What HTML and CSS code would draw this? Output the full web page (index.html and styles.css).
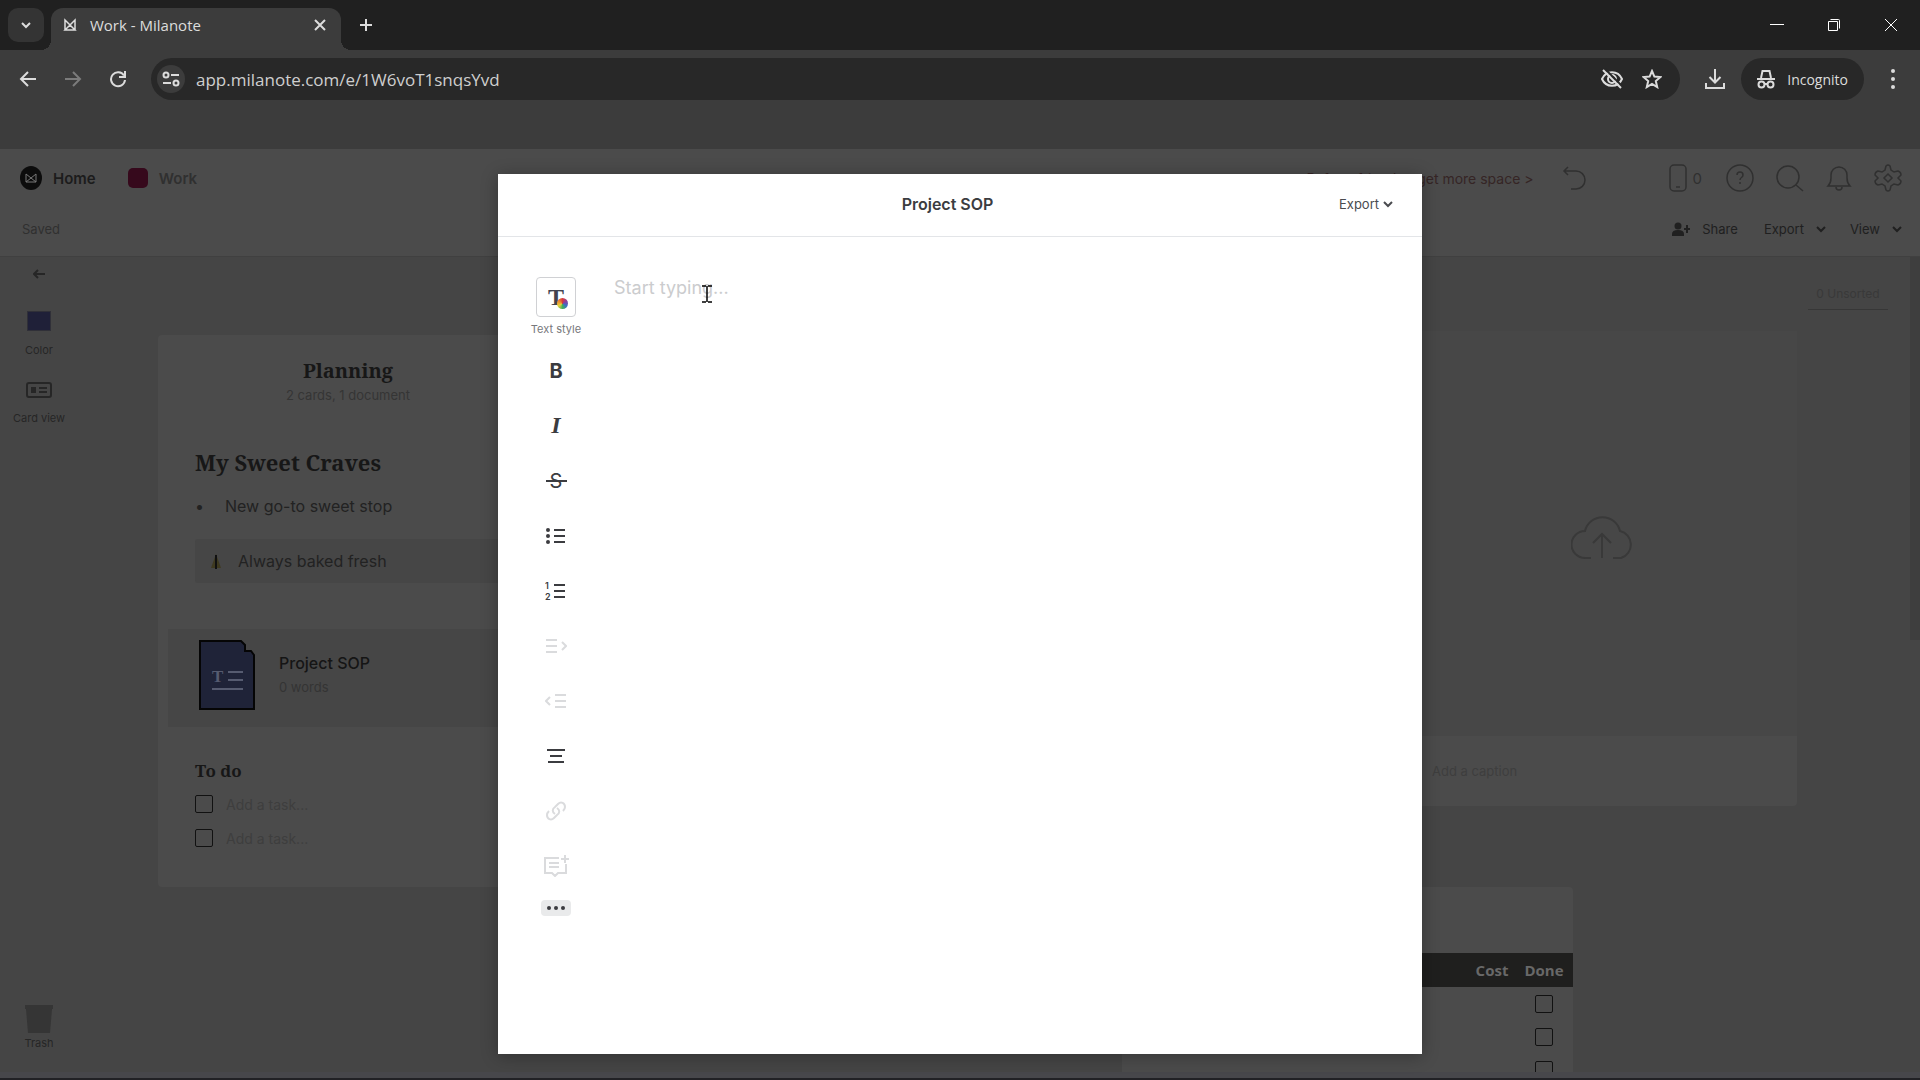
FILE: index.html
```html
<!DOCTYPE html>
<html lang="en">
<head>
<meta charset="UTF-8">
<meta name="viewport" content="width=device-width, initial-scale=1.0">
<title>Work - Milanote</title>
<link rel="stylesheet" href="styles.css">
</head>
<body>

<!-- browser window -->
<header class="browser">
    <div class="tab-strip">
        <button class="tab-search" aria-label="Search tabs">
            <svg width="12" height="12" viewBox="0 0 12 12"><path d="M2 4l4 4 4-4"/></svg>
        </button>
        <div class="tab">
            <svg class="favicon" width="14" height="16" viewBox="0 0 14 16"><path d="M2 13V3l5 5 5-5v10M2 13l5-5 5 5z"/></svg>
            <span class="tab-title">Work - Milanote</span>
            <button class="icon-btn" aria-label="Close tab">
                <svg width="12" height="12" viewBox="0 0 12 12"><path d="M1 1l10 10M11 1L1 11"/></svg>
            </button>
        </div>
        <button class="icon-btn new-tab" aria-label="New tab">
            <svg width="14" height="14" viewBox="0 0 14 14"><path d="M7 1v12M1 7h12"/></svg>
        </button>
        <div class="window-controls">
            <button class="icon-btn" aria-label="Minimize">
                <svg width="14" height="14" viewBox="0 0 14 14"><path d="M0 6.500h14"/></svg>
            </button>
            <button class="icon-btn" aria-label="Restore">
                <svg width="14" height="14" viewBox="0 0 14 14"><path d="M1.500 3.500h9v9h-9zM3.500 1.500h8a1 1 0 0 1 1 1v8"/></svg>
            </button>
            <button class="icon-btn" aria-label="Close">
                <svg width="14" height="14" viewBox="0 0 14 14"><path d="M1 1l12 12M13 1L1 13"/></svg>
            </button>
        </div>
    </div>
    <div class="nav-bar">
        <button class="icon-btn" aria-label="Back">
            <svg width="18" height="18" viewBox="0 0 18 18"><path d="M17 9H2M9 2L2 9l7 7"/></svg>
        </button>
        <button class="icon-btn faded" aria-label="Forward">
            <svg width="18" height="18" viewBox="0 0 18 18"><path d="M1 9h15M9 2l7 7-7 7"/></svg>
        </button>
        <button class="icon-btn" aria-label="Reload">
            <svg width="18" height="18" viewBox="0 0 18 18"><path d="M15 5.500A7 7 0 1 0 16 10M16 1v6h-6"/></svg>
        </button>
        <div class="omnibox">
            <button class="site-info" aria-label="Site information">
                <svg width="18" height="16" viewBox="0 0 18 16"><circle cx="4" cy="4" r="2.500"/><path d="M9 4h8M1 12h8"/><circle cx="14" cy="12" r="2.500"/></svg>
            </button>
            <input class="url" type="text" aria-label="Address" value="app.milanote.com/e/1W6voT1snqsYvd">
            <button class="icon-btn" aria-label="Cookies blocked">
                <svg width="24" height="22" viewBox="0 0 24 22"><path d="M2 11c4-9 16-9 20 0c-4 9-16 9-20 0z"/><circle cx="12" cy="11" r="4"/><path class="gap" d="M4 0l19 19"/><path d="M3 2l18 18"/></svg>
            </button>
            <button class="icon-btn" aria-label="Bookmark">
                <svg width="20" height="20" viewBox="0 0 20 20"><path d="M10 2l2.400 5.600 6 .5-4.600 4 1.400 6L10 15l-5.200 3.100 1.400-6-4.600-4 6-.5z"/></svg>
            </button>
        </div>
        <button class="icon-btn" aria-label="Downloads">
            <svg width="22" height="22" viewBox="0 0 22 22"><path d="M11 1v13M5.500 9l5.500 5.500L16.500 9M2 15v5h18v-5"/></svg>
        </button>
        <button class="incognito">
            <svg width="18" height="20" viewBox="0 0 18 20"><path d="M0 10h18M4 9l1.500-7h7L14 9"/><circle cx="4.500" cy="15.500" r="3"/><circle cx="13.500" cy="15.500" r="3"/><path d="M7.500 15h3"/></svg>
            Incognito
        </button>
        <button class="icon-btn" aria-label="Menu">
            <svg class="solid" width="4" height="20" viewBox="0 0 4 20"><circle cx="2" cy="2" r="2"/><circle cx="2" cy="10" r="2"/><circle cx="2" cy="18" r="2"/></svg>
        </button>
    </div>
</header>

<main class="app">
    <div class="app-header">
        <div class="header-row">
            <a class="crumb home" href="#">
                <svg width="22" height="24" viewBox="0 0 22 24"><ellipse class="ink" cx="11" cy="12" rx="11" ry="12"/><path d="M6 16V8l5 4 5-4v8M6 16l5-4 5 4z"/></svg>
                Home
            </a>
            <a class="crumb" href="#"><span class="board-icon"></span>Work</a>
            <a class="upsell" href="#">Refer a friend to get more space &gt;</a>
            <button class="icon-btn undo" aria-label="Undo">
                <svg width="24" height="24" viewBox="0 0 24 24"><path d="M6 1L2 5l4 4M2 5h12a9 9 0 0 1 0 18h-5"/></svg>
            </button>
            <button class="icon-btn phone">
                <svg width="20" height="30" viewBox="0 0 20 30"><rect x="2" y="2" width="16" height="26" rx="4"/><path d="M8 24h4"/></svg>
                0
            </button>
            <button class="icon-btn" aria-label="Help">
                <svg width="28" height="28" viewBox="0 0 28 28"><circle cx="14" cy="14" r="13"/><path d="M11 11c0-4 6-4 6 0c0 3-3 2-3 5M14 18v2"/></svg>
            </button>
            <button class="icon-btn" aria-label="Search">
                <svg width="28" height="28" viewBox="0 0 28 28"><circle cx="12" cy="13" r="11"/><path d="M20 21l7 6"/></svg>
            </button>
            <button class="icon-btn" aria-label="Notifications">
                <svg width="26" height="28" viewBox="0 0 26 28"><path d="M2 22c2-2 3-4 3-8v-3a8 8 0 0 1 16 0v3c0 4 1 6 3 8zM10 23a3 3 0 0 0 6 0"/></svg>
            </button>
            <button class="icon-btn" aria-label="Settings">
                <svg width="28" height="28" viewBox="0 0 28 28"><path d="M12 2q2-2 4 0l1 4 3 2 4-1q3 1 3 4l-3 3 3 3q0 3-3 4l-4-1-3 2-1 4q-2 2-4 0l-1-4-3-2-4 1q-3-1-3-4l3-3-3-3q0-3 3-4l4 1 3-2z"/><path d="M14 10l4 4-4 4-4-4z"/></svg>
            </button>
        </div>
        <div class="header-row sub">
            <span class="saved">Saved</span>
            <button class="text-btn share">
                <svg class="solid" width="18" height="14" viewBox="0 0 18 14"><circle cx="6" cy="4" r="3.500"/><path d="M0 14v-2q0-4 6-4t6 4v2zM14 3h2v3h2v2h-2v3h-2V8h-2V6h2z"/></svg>
                Share
            </button>
            <button class="text-btn">Export <svg width="10" height="8" viewBox="0 0 10 8"><path d="M1 2l4 4 4-4"/></svg></button>
            <button class="text-btn">View <svg width="10" height="8" viewBox="0 0 10 8"><path d="M1 2l4 4 4-4"/></svg></button>
        </div>
    </div>

    <div class="workspace">
        <nav class="tools">
            <button class="tool" aria-label="Back">
                <svg width="12" height="10" viewBox="0 0 12 10"><path d="M12 5H1M5 1L1 5l4 4"/></svg>
            </button>
            <button class="tool"><span class="swatch"></span>Color</button>
            <button class="tool">
                <svg width="26" height="18" viewBox="0 0 26 18"><rect x="1" y="2" width="24" height="14" rx="2"/><path class="ink" d="M5 6h5v6H5z"/><path d="M13 7h8M13 11h8"/></svg>
                Card view
            </button>
            <button class="tool trash">
                <svg width="30" height="30" viewBox="0 0 30 30"><path d="M1 1h28v4h-1l-2 24H4L2 5H1z"/></svg>
                Trash
            </button>
        </nav>

        <div class="canvas">
            <button class="unsorted">0 Unsorted</button>

            <section class="column planning">
                <h2>Planning</h2>
                <p class="count">2 cards, 1 document</p>
                <div class="note">
                    <h1>My Sweet Craves</h1>
                    <ul>
                        <li>New go-to sweet stop</li>
                    </ul>
                    <p class="callout">
                        <svg width="12" height="18" viewBox="0 0 12 18"><path class="glow" d="M6 2l5 14H1z"/><path class="wick" d="M6 3v14"/></svg>
                        Always baked fresh
                    </p>
                </div>
                <div class="document">
                    <svg width="58" height="72" viewBox="0 0 58 72">
                        <path class="sheet" d="M2 2h41l4 4v6h6l3 4v54H2z"/>
                        <text x="14" y="43">T</text>
                        <path class="lines" d="M30 33h15M30 41h15M14 50h31"/>
                    </svg>
                    <div>
                        <h3>Project SOP</h3>
                        <p>0 words</p>
                    </div>
                </div>
                <div class="todo">
                    <h4>To do</h4>
                    <div class="task"><input type="checkbox" aria-label="Done"><input type="text" placeholder="Add a task..." aria-label="Task 1"></div>
                    <div class="task"><input type="checkbox" aria-label="Done"><input type="text" placeholder="Add a task..." aria-label="Task 2"></div>
                </div>
            </section>

            <section class="column upload">
                <div class="drop">
                    <svg width="62" height="48" viewBox="0 0 62 48"><path d="M20 46H14A13 13 0 0 1 14 19A18 18 0 0 1 49 19A14 14 0 0 1 50 46H42M31 46V23M22 31l9-9 9 9"/></svg>
                </div>
                <input class="caption" type="text" placeholder="Add a caption" aria-label="Caption">
            </section>

            <section class="column costs">
                <table>
                    <thead>
                        <tr><th></th><th>Cost</th><th>Done</th></tr>
                    </thead>
                    <tbody>
                        <tr><td></td><td></td><td><input type="checkbox" aria-label="Done"></td></tr>
                        <tr><td></td><td></td><td><input type="checkbox" aria-label="Done"></td></tr>
                        <tr><td></td><td></td><td><input type="checkbox" aria-label="Done"></td></tr>
                    </tbody>
                </table>
            </section>
            <div class="scroll-y"></div>
        </div>
    </div>
    <div class="scroll-x"></div>

    <!-- document editor -->
    <div class="overlay">
        <div class="modal" role="dialog" aria-labelledby="docTitle">
            <div class="modal-header">
                <h2 id="docTitle">Project SOP</h2>
                <button class="text-btn">Export <svg width="10" height="8" viewBox="0 0 10 8"><path d="M1 2l4 4 4-4"/></svg></button>
            </div>
            <div class="modal-body">
                <div class="format-bar">
                    <button class="text-style">
                        <span class="style-box">
                            <span class="big-t">T</span>
                            <span class="wheel"></span>
                        </span>
                        Text style
                    </button>
                    <button class="format bold">B</button>
                    <button class="format italic">I</button>
                    <button class="format strike" aria-label="Strikethrough"><span>S</span></button>
                    <button class="format" aria-label="Bullet list">
                        <svg width="20" height="18" viewBox="0 0 20 18"><path d="M8 3h11M8 9h11M8 15h11"/><circle class="dot" cx="2" cy="3" r="2"/><circle class="dot" cx="2" cy="9" r="2"/><circle class="dot" cx="2" cy="15" r="2"/></svg>
                    </button>
                    <button class="format" aria-label="Numbered list">
                        <svg width="22" height="20" viewBox="0 0 22 20"><text x="0" y="8">1</text><text x="0" y="19">2</text><path d="M9 4h11M9 10h11M9 16h11"/></svg>
                    </button>
                    <button class="format" disabled aria-label="Indent">
                        <svg width="22" height="16" viewBox="0 0 22 16"><path d="M1 2h11M1 8h11M1 14h11M17 4l4 4-4 4"/></svg>
                    </button>
                    <button class="format" disabled aria-label="Outdent">
                        <svg width="22" height="16" viewBox="0 0 22 16"><path d="M10 2h11M10 8h11M10 14h11M5 4L1 8l4 4"/></svg>
                    </button>
                    <button class="format" aria-label="Align">
                        <svg width="20" height="16" viewBox="0 0 20 16"><path d="M1 2h18M4 8h12M2 14h16"/></svg>
                    </button>
                    <button class="format" disabled aria-label="Link">
                        <svg width="20" height="20" viewBox="0 0 20 20"><path d="M9 13c-3-2-3-5 0-7l3-3c3-3 7-1 7 3c0 2-1 3-2 4M11 7c3 2 3 5 0 7l-3 3c-3 3-7 1-7-3c0-2 1-3 2-4"/></svg>
                    </button>
                    <button class="format" disabled aria-label="Comment">
                        <svg width="26" height="22" viewBox="0 0 26 22"><path d="M16 3H2v15h7l3 3 3-3h8V9M6 8h10M6 12h10M22 0v8M18 4h8"/></svg>
                    </button>
                    <button class="more" aria-label="More">
                        <svg width="18" height="4" viewBox="0 0 18 4"><circle cx="2" cy="2" r="2"/><circle cx="9" cy="2" r="2"/><circle cx="16" cy="2" r="2"/></svg>
                    </button>
                </div>
                <div class="editor">
                    <textarea placeholder="Start typing..." aria-label="Document text"></textarea>
                    <svg class="caret" width="10" height="18" viewBox="0 0 10 18"><path d="M0 1h4M6 1h4M5 1v16M0 17h4M6 17h4"/></svg>
                </div>
            </div>
        </div>
    </div>
</main>

</body>
</html>
```

FILE: styles.css
```css
* {
  box-sizing: border-box;
}
body {
  margin: 0;
  height: 100vh;
  display: flex;
  flex-direction: column;
  overflow: hidden;
  font-family: Inter, "Liberation Sans", sans-serif;
  background-color: #3c3c3c;
}
h1, h2, h3, h4, p, ul {
  margin: 0;
  padding: 0;
}
button {
  font: inherit;
  color: inherit;
  background: none;
  border: none;
  padding: 0;
}
input, textarea {
  font: inherit;
  color: inherit;
  background: none;
  border: none;
  padding: 0;
  outline: none;
}
a {
  color: inherit;
  text-decoration: none;
}
svg {
  display: block;
  flex: none;
  fill: none;
  stroke: currentColor;
  stroke-width: 2;
}
.solid {
  fill: currentColor;
  stroke: none;
}
.icon-btn {
  display: flex;
  align-items: center;
  justify-content: center;
}

/* browser */
.browser {
  flex: none;
  height: 149px;
  color: #dcdcdc;
  font-family: "Open Sans", "Noto Sans", sans-serif;
  font-size: 14px;
}
.tab-strip {
  display: flex;
  align-items: center;
  height: 50px;
  padding: 8px 22px 0 8px;
  background-color: #202020;
}
.tab-search {
  display: flex;
  align-items: center;
  justify-content: center;
  width: 36px;
  height: 34px;
  margin: 0 7px 8px 0;
  border-radius: 10px;
  background-color: #343434;
}
.tab {
  position: relative;
  display: flex;
  align-items: center;
  align-self: stretch;
  width: 290px;
  padding: 0 15px 8px 12px;
  border-radius: 12px 12px 0 0;
  background-color: #3c3c3c;
}
.tab::before, .tab::after {
  content: "";
  position: absolute;
  bottom: 0;
  width: 10px;
  height: 10px;
}
.tab::before {
  right: 100%;
  background: radial-gradient(circle at 0 0, #202020 10px, #3c3c3c 10px);
}
.tab::after {
  left: 100%;
  background: radial-gradient(circle at 100% 0, #202020 10px, #3c3c3c 10px);
}
.favicon {
  margin-right: 13px;
}
.favicon path {
  stroke-width: 1.500;
}
.tab-title {
  flex: 1;
  font-size: 15px;
}
.new-tab {
  margin: 0 0 8px 18px;
}
.window-controls {
  display: flex;
  gap: 43px;
  margin: 0 0 8px auto;
  color: #fff;
}
.window-controls svg {
  stroke-width: 1;
}
.nav-bar {
  display: flex;
  align-items: center;
  height: 58px;
  padding: 0 25px 0 19px;
}
.nav-bar > .icon-btn {
  margin-right: 27px;
}
.faded {
  color: #7b7b7b;
}
.omnibox {
  flex: 1;
  display: flex;
  align-items: center;
  gap: 18px;
  height: 42px;
  margin: 0 24px 0 -3px;
  padding: 0 18px 0 6px;
  border-radius: 21px;
  background-color: #282828;
}
.site-info {
  display: flex;
  align-items: center;
  justify-content: center;
  width: 28px;
  height: 28px;
  border-radius: 14px;
  background-color: #3c3c3c;
}
.url {
  flex: 1;
  margin-left: -7px;
  font-size: 17px;
  color: #cfcfcf;
}
.gap {
  stroke: #282828;
}
.nav-bar > .incognito {
  display: flex;
  align-items: center;
  gap: 12px;
  height: 42px;
  margin: 0 27px 0 -12px;
  padding: 0 16px;
  border-radius: 21px;
  background-color: #282828;
}
.nav-bar > .icon-btn:last-child {
  margin-right: 0;
}

/* board header */
.app {
  flex: 1;
  min-height: 0;
  position: relative;
  display: flex;
  flex-direction: column;
  background-color: #454545;
  color: #222;
}
.app-header {
  flex: none;
  height: 108px;
  padding: 4px 18px 0 20px;
  background-color: #4b4b4b;
  border-bottom: 1px solid #404040;
}
.header-row {
  display: flex;
  align-items: center;
  height: 50px;
  gap: 22px;
  color: #303030;
}
.header-row .icon-btn svg {
  stroke-width: 1.500;
}
.crumb {
  display: flex;
  align-items: center;
  gap: 11px;
  margin-right: 10px;
  font-size: 15px;
  font-weight: 600;
}
.home {
  color: #1c1c1c;
}
.home svg {
  stroke: #777;
  stroke-width: 1;
}
.ink {
  fill: currentColor;
  stroke: none;
}
.home .ink {
  fill: #0c0c0c;
}
.board-icon {
  width: 20px;
  height: 20px;
  border-radius: 5px;
  background-color: #36091c;
}
.upsell {
  margin-left: auto;
  font-size: 14px;
  color: #352525;
}
.undo {
  margin: 0 60px 0 6px;
}
.phone {
  gap: 5px;
  margin-right: 2px;
  font-size: 15px;
}
.sub {
  height: 52px;
  font-size: 13px;
  gap: 24px;
}
.saved {
  margin: 0 auto 0 2px;
}
.text-btn {
  display: flex;
  align-items: center;
  gap: 12px;
  font-size: 13px;
  color: #202020;
}
.share {
  margin-right: 2px;
}

/* tools */
.workspace {
  flex: 1;
  min-height: 0;
  display: flex;
}
.tools {
  display: flex;
  flex-direction: column;
  align-items: center;
  gap: 24px;
  width: 78px;
  padding: 12px 0 22px;
}
.tool {
  display: flex;
  flex-direction: column;
  align-items: center;
  gap: 12px;
  font-size: 11px;
  line-height: 14px;
  color: #262626;
}
.swatch {
  width: 24px;
  height: 20px;
  margin-top: 8px;
  border: 1px solid #303038;
  background-color: #1f2038;
}
.trash {
  gap: 2px;
  margin-top: auto;
}
.trash svg {
  fill: #353535;
  stroke: none;
}

/* canvas */
.canvas {
  flex: 1;
  position: relative;
  overflow: hidden;
}
.unsorted {
  position: absolute;
  top: 29px;
  right: 32px;
  width: 80px;
  padding-bottom: 8px;
  border-bottom: 1px solid #373737;
  font-size: 12px;
  color: #393939;
}
.column {
  position: absolute;
  border-radius: 4px;
  background-color: #4b4b4b;
}
.planning {
  left: 80px;
  top: 78px;
  width: 380px;
  padding: 24px 0 32px;
}
.column h1, .column h2, .column h4 {
  font-family: "Noto Serif", "Liberation Serif", serif;
  font-weight: bold;
  color: #171717;
}
.planning h2 {
  font-size: 20px;
  line-height: 24px;
  text-align: center;
}
.count {
  font-size: 13px;
  line-height: 24px;
  text-align: center;
  color: #353535;
}
.note {
  padding: 39px 0 46px 37px;
}
.note h1 {
  font-size: 22px;
  line-height: 32px;
}
.note ul {
  padding: 16px 0 21px;
  list-style: none;
  font-size: 16px;
  line-height: 24px;
}
.note li {
  display: flex;
}
.note li::before {
  content: "•";
  width: 30px;
}
.callout {
  display: flex;
  align-items: center;
  gap: 16px;
  height: 44px;
  padding-left: 15px;
  border-radius: 3px;
  font-size: 16px;
  background-color: #464646;
}
.glow {
  fill: #3f3a20;
  stroke: none;
}
.wick {
  stroke: #111;
}
.document {
  display: flex;
  align-items: center;
  gap: 23px;
  height: 98px;
  margin: 0 10px;
  padding: 0 0 6px 30px;
  background-color: #464646;
}
.sheet {
  fill: #1f2338;
  stroke: #050505;
}
.lines {
  stroke: #565b70;
}
.document text {
  font-family: "Liberation Serif", serif;
  font-size: 17px;
  font-weight: bold;
  fill: #565b70;
  stroke: none;
}
.document h3 {
  font-size: 16px;
  font-weight: 500;
  line-height: 24px;
  color: #151515;
}
.document p {
  font-size: 13px;
  line-height: 24px;
  color: #343434;
}
.todo {
  padding: 30px 0 0 37px;
}
.todo h4 {
  font-size: 17px;
  line-height: 28px;
  margin-bottom: 2px;
}
.task {
  display: flex;
  align-items: center;
  gap: 13px;
  height: 34px;
  font-size: 14px;
}
input[type="checkbox"] {
  appearance: none;
  display: block;
  width: 18px;
  height: 18px;
  margin: 0;
  border: 1px solid #111;
  border-radius: 2px;
}
.task ::placeholder {
  color: #3e3e3e;
  opacity: 1;
}
.upload {
  left: 1329px;
  top: 74px;
  width: 390px;
}
.drop {
  display: flex;
  justify-content: center;
  height: 405px;
  padding-top: 181px;
  color: #393939;
  background-color: #474747;
}
.caption {
  display: block;
  width: 100%;
  height: 70px;
  padding-left: 25px;
  font-size: 13px;
}
.caption::placeholder {
  color: #3e3e3e;
  opacity: 1;
}
.costs {
  left: 1044px;
  top: 630px;
  width: 451px;
  padding-top: 66px;
}
table {
  width: 100%;
  border-collapse: collapse;
  font-family: "Open Sans", sans-serif;
  font-size: 15px;
}
th {
  height: 34px;
  padding: 0;
  color: #686868;
  background-color: #1f1f1e;
}
th:nth-child(2) {
  width: 46px;
}
th:nth-child(3) {
  width: 58px;
}
td {
  height: 33px;
  padding: 0;
}
td input[type="checkbox"] {
  margin: 0 auto;
}
.scroll-y {
  position: absolute;
  top: 0;
  right: 0;
  width: 10px;
  height: 383px;
  background-color: #3e3e3e;
}
.scroll-x {
  height: 8px;
  background-color: #47474b;
  border-bottom: 2px solid #212125;
}

/* document editor */
.overlay {
  position: absolute;
  inset: 0;
  display: flex;
  justify-content: center;
  padding: 25px 25px 26px;
}
.modal {
  display: flex;
  flex-direction: column;
  width: 100%;
  max-width: 924px;
  background-color: #fff;
  box-shadow: 0 2px 16px rgba(0, 0, 0, 0.3);
}
.modal-header {
  display: grid;
  grid-template-columns: 1fr auto 1fr;
  align-items: center;
  height: 63px;
  padding: 0 29px 2px 4px;
  border-bottom: 1px solid #e3e5e8;
}
.modal-header h2 {
  grid-column: 2;
  font-size: 16px;
  font-weight: 600;
  color: #3b3c40;
}
.modal-header .text-btn {
  justify-self: end;
  gap: 4px;
  color: #4a4b4f;
}
.modal-body {
  flex: 1;
  display: flex;
  padding: 40px 28px;
}
.format-bar {
  display: flex;
  flex-direction: column;
  align-items: center;
  width: 60px;
  color: #3b3c40;
}
.text-style {
  display: flex;
  flex-direction: column;
  align-items: center;
  gap: 5px;
  margin-bottom: 7px;
  font-size: 11px;
  line-height: 14px;
  color: #77787c;
}
.style-box {
  position: relative;
  width: 40px;
  height: 40px;
  border: 1px solid #d0d1d4;
  border-radius: 4px;
}
.big-t {
  display: block;
  font-family: "Liberation Serif", serif;
  font-size: 24px;
  font-weight: bold;
  line-height: 38px;
  color: #42434f;
}
.wheel {
  position: absolute;
  right: 7px;
  bottom: 7px;
  width: 11px;
  height: 11px;
  border-radius: 50%;
  background: conic-gradient(#d83a3a, #8a3fa0, #3a6fc4, #3fae5a, #e8d23a, #ee8a2c, #d83a3a);
}
.format {
  display: flex;
  align-items: center;
  justify-content: center;
  width: 40px;
  height: 55px;
}
.bold {
  font-size: 20px;
  font-weight: 700;
}
.italic {
  font-family: "Liberation Serif", serif;
  font-size: 24px;
  font-style: italic;
  font-weight: bold;
}
.strike {
  font-size: 20px;
}
.strike span {
  width: 21px;
  background: linear-gradient(#3b3c40, #3b3c40) center / 100% 2px no-repeat;
}
.dot {
  fill: currentColor;
  stroke: none;
}
.format text {
  font-size: 9px;
  font-weight: 600;
  fill: currentColor;
  stroke: none;
}
.format:disabled {
  color: #dadbdd;
}
.more {
  display: flex;
  align-items: center;
  justify-content: center;
  width: 30px;
  height: 16px;
  margin-top: 7px;
  border-radius: 4px;
  background-color: #e9eaeb;
}
.more svg {
  fill: currentColor;
  stroke: none;
}
.editor {
  flex: 1;
  position: relative;
  padding-left: 28px;
}
.editor textarea {
  display: block;
  width: 100%;
  height: 100%;
  resize: none;
  font-size: 18px;
  line-height: 22px;
}
.editor textarea::placeholder {
  color: #cbccce;
  opacity: 1;
}
.caret {
  position: absolute;
  left: 116px;
  top: 8px;
  stroke: #000;
  stroke-width: 1.500;
}
```
